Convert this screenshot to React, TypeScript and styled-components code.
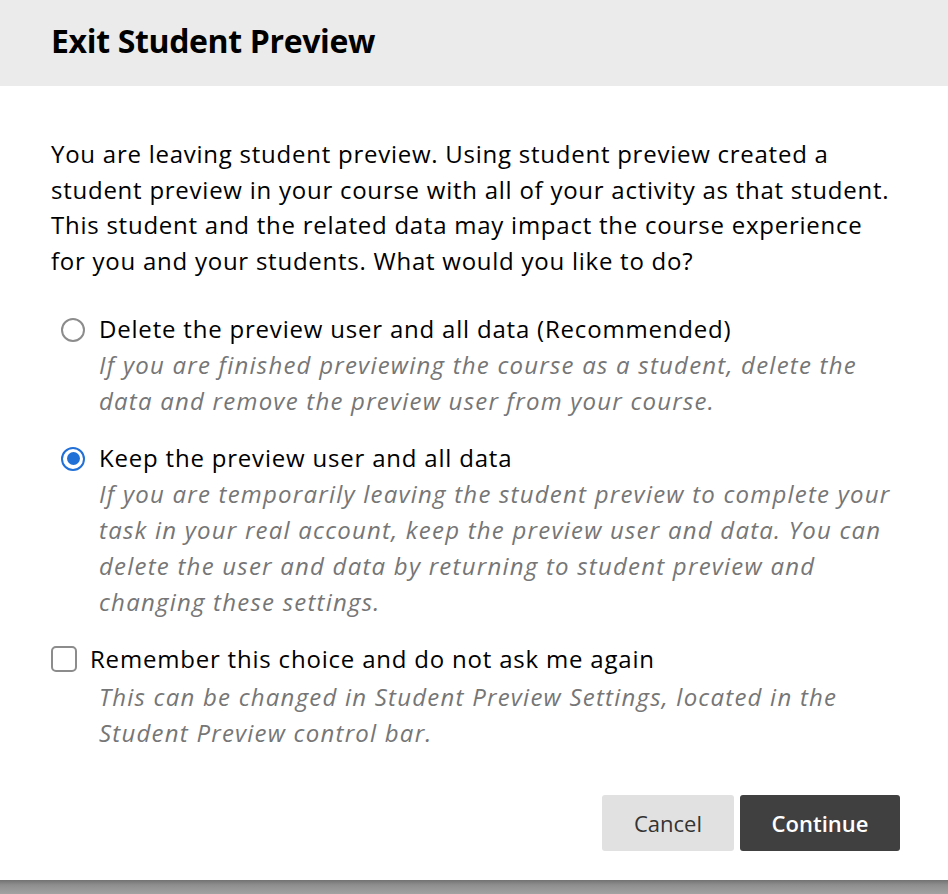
import React, { useState } from "react";
import styled, { createGlobalStyle } from "styled-components";

const Global = createGlobalStyle`
  html, body { margin: 0; padding: 0; }
  body {
    background: #a3a3a3;
    font-family: "Open Sans", "Noto Sans", sans-serif;
    color: #000;
    -webkit-font-smoothing: antialiased;
  }
`;

const Dialog = styled.div`
  width: 948px;
  height: 880px;
  background: #fff;
  display: flex;
  flex-direction: column;
`;

const Backdrop = styled.div`
  height: 14px;
  background: linear-gradient(to bottom, #727272 0%, #8e8e8e 35%, #a2a2a2 100%);
`;

const Header = styled.header`
  height: 86px;
  background: #ebebeb;
  display: flex;
  align-items: center;
  padding: 0 0 6px 51px;
  box-sizing: border-box;
`;

const Title = styled.h1`
  margin: 0;
  font-size: 32px;
  font-weight: 700;
  letter-spacing: -0.35px;
`;

const Body = styled.div`
  padding: 50px 48px 0 51px;
  display: flex;
  flex-direction: column;
`;

const Intro = styled.p`
  margin: 0;
  font-size: 24px;
  line-height: 35.7px;
  letter-spacing: 0.75px;
  white-space: nowrap;
`;

const Options = styled.div`
  display: flex;
  flex-direction: column;
  margin-top: 32px;
  gap: 21px;
`;

const OptionRow = styled.label`
  display: flex;
  align-items: flex-start;
  gap: 14px;
  padding-left: 10px;
  cursor: pointer;
`;

const RadioMark = styled.span<{ $checked: boolean }>`
  flex: none;
  width: 24px;
  height: 24px;
  margin-top: 7px;
  box-sizing: border-box;
  border-radius: 50%;
  border: 2px solid ${(p) => (p.$checked ? "#2170d8" : "#8c8c8c")};
  display: flex;
  align-items: center;
  justify-content: center;
  &::after {
    content: "";
    width: 13px;
    height: 13px;
    border-radius: 50%;
    background: ${(p) => (p.$checked ? "#2170d8" : "transparent")};
  }
`;

const OptionText = styled.div`
  display: flex;
  flex-direction: column;
`;

const Label = styled.span`
  font-size: 24px;
  line-height: 36px;
  letter-spacing: 0.8px;
  white-space: nowrap;
`;

const Hint = styled.span<{ $indent?: number; $gap?: number }>`
  font-size: 24px;
  line-height: 36px;
  letter-spacing: 1.22px;
  font-style: italic;
  color: #767676;
  white-space: nowrap;
  margin-left: ${(p) => p.$indent ?? 0}px;
  margin-top: ${(p) => p.$gap ?? 0}px;
`;

const CheckBlock = styled.div`
  display: flex;
  flex-direction: column;
`;

const CheckRow = styled.label`
  display: flex;
  align-items: flex-start;
  gap: 13px;
  cursor: pointer;
`;

const CheckMark = styled.span`
  flex: none;
  width: 26px;
  height: 26px;
  margin-top: 5px;
  box-sizing: border-box;
  border: 2px solid #8c8c8c;
  border-radius: 5px;
`;

const Footer = styled.div`
  display: flex;
  justify-content: flex-end;
  gap: 6px;
  margin-top: 44px;
`;

const Button = styled.button<{ $primary?: boolean }>`
  height: 56px;
  padding: 0;
  width: ${(p) => (p.$primary ? 160 : 132)}px;
  border: none;
  border-radius: 3px;
  font-family: "Open Sans", sans-serif;
  font-size: 22px;
  font-weight: ${(p) => (p.$primary ? 600 : 400)};
  background: ${(p) => (p.$primary ? "#404040" : "#e1e1e1")};
  color: ${(p) => (p.$primary ? "#fff" : "#333")};
  cursor: pointer;
`;

export default function App() {
  const [choice, setChoice] = useState<"delete" | "keep">("keep");
  return (
    <>
      <Global />
      <Dialog>
        <Header>
          <Title>Exit Student Preview</Title>
        </Header>
        <Body>
          <Intro>
            You are leaving student preview. Using student preview created a
            <br />
            student preview in your course with all of your activity as that student.
            <br />
            This student and the related data may impact the course experience
            <br />
            for you and your students. What would you like to do?
          </Intro>
          <Options>
            <OptionRow onClick={() => setChoice("delete")}>
              <RadioMark $checked={choice === "delete"} />
              <OptionText>
                <Label>Delete the preview user and all data (Recommended)</Label>
                <Hint>
                  If you are finished previewing the course as a student, delete the
                  <br />
                  data and remove the preview user from your course.
                </Hint>
              </OptionText>
            </OptionRow>
            <OptionRow onClick={() => setChoice("keep")}>
              <RadioMark $checked={choice === "keep"} />
              <OptionText>
                <Label>Keep the preview user and all data</Label>
                <Hint>
                  If you are temporarily leaving the student preview to complete your
                  <br />
                  task in your real account, keep the preview user and data. You can
                  <br />
                  delete the user and data by returning to student preview and
                  <br />
                  changing these settings.
                </Hint>
              </OptionText>
            </OptionRow>
            <CheckBlock>
              <CheckRow>
                <CheckMark />
                <Label>Remember this choice and do not ask me again</Label>
              </CheckRow>
              <Hint $indent={48} $gap={2}>
                This can be changed in Student Preview Settings, located in the
                <br />
                Student Preview control bar.
              </Hint>
            </CheckBlock>
          </Options>
          <Footer>
            <Button>Cancel</Button>
            <Button $primary>Continue</Button>
          </Footer>
        </Body>
      </Dialog>
      <Backdrop />
    </>
  );
}
